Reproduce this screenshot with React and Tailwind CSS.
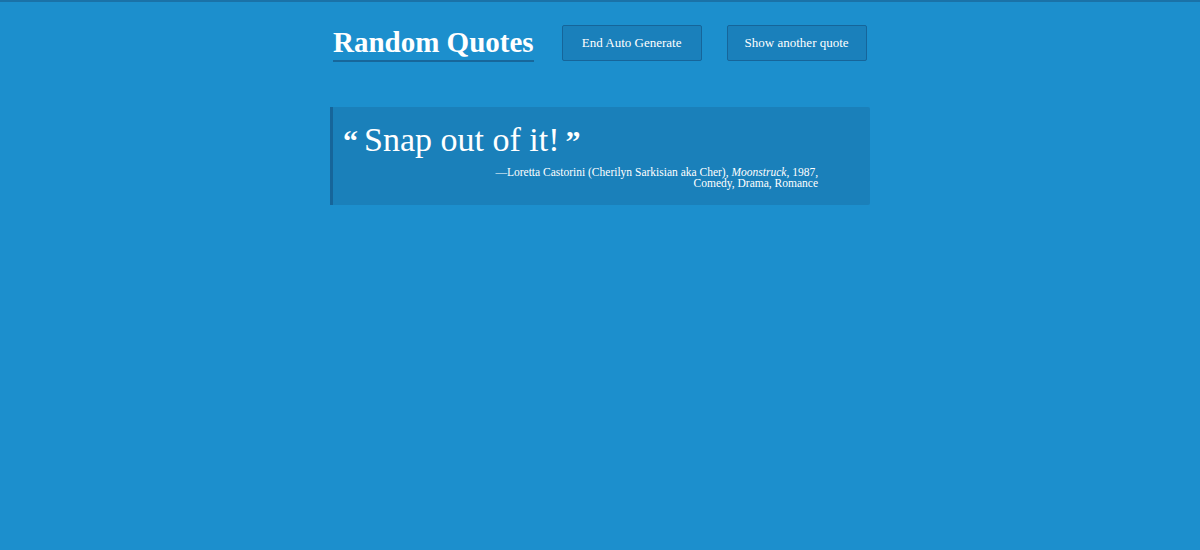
import React from "react";

export default function App() {
  const serif = { fontFamily: '"Liberation Serif", "DejaVu Serif", serif' };

  return (
    <div className="min-h-[550px] w-full bg-[#1c8fcd] border-t-2 border-[#1a72a8] text-white" style={serif}>
      <div className="mx-auto w-[540px] pt-[21px]">
        <header className="flex items-center pl-[3px]">
          <h1 className="mt-[2px] text-[29px] font-bold leading-[34px] border-b-2 border-[#17679b] pb-[1px]">
            Random Quotes
          </h1>
          <button className="ml-[28px] w-[140px] h-[36px] bg-[#1a80bb] border border-[#16659a] rounded-[2px] text-[13px] text-white">
            End Auto Generate
          </button>
          <button className="ml-[25px] w-[140px] h-[36px] bg-[#1a80bb] border border-[#16659a] rounded-[2px] text-[13px] text-white">
            Show another quote
          </button>
        </header>

        <blockquote className="mt-[45px] bg-[#1a80ba] border-l-[3px] border-[#16659a] pl-[10px] pr-[52px] pt-[13px] pb-[16px] rounded-r-[2px]">
          <p className="text-[34px] leading-[40px]">
            <span className="font-bold text-[30px] mr-[6px]">“</span>
            Snap out of it!
            <span className="font-bold text-[30px] ml-[6px]">”</span>
          </p>
          <footer className="mt-[6px] text-right text-[11.5px] leading-[11px]">
            <div>
              —Loretta Castorini (Cherilyn Sarkisian aka Cher), <i>Moonstruck</i>, 1987,
            </div>
            <div>Comedy, Drama, Romance</div>
          </footer>
        </blockquote>
      </div>
    </div>
  );
}
